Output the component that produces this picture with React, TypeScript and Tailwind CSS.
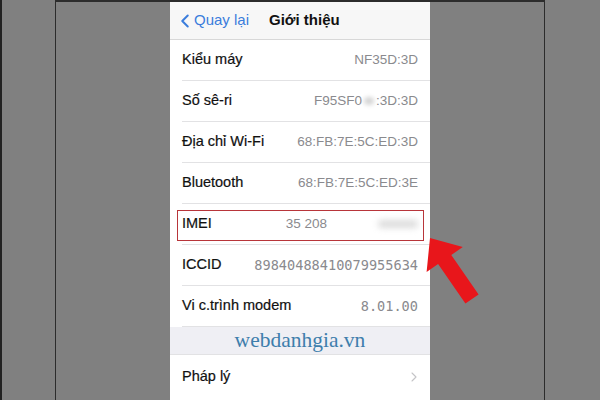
import { ChevronLeft, ChevronRight } from 'lucide-react';

type Row = {
  label: string;
  value: string;
  mono?: boolean;
  smudge?: 'mid' | 'end';
};

const rows: Row[] = [
  { label: 'Kiểu máy', value: 'NF35D:3D' },
  { label: 'Số sê-ri', value: 'F95SF0', smudge: 'mid' },
  { label: 'Địa chỉ Wi-Fi', value: '68:FB:7E:5C:ED:3D' },
  { label: 'Bluetooth', value: '68:FB:7E:5C:ED:3E' },
  { label: 'IMEI', value: '35 208', smudge: 'end' },
  { label: 'ICCID', value: '89840488410079955634', mono: true },
  { label: 'Vi c.trình modem', value: '8.01.00', mono: true },
];

function InfoRow({ row }: { row: Row }) {
  return (
    <div className="pl-3">
      <div className="h-[41px] flex items-center justify-between pr-3 border-b border-[#e2e2e4]">
        <span className="text-[14.5px] text-[#111] [-webkit-text-stroke:0.2px_#111]">{row.label}</span>
        {row.smudge === 'end' ? (
          <div className="flex items-center flex-1 pl-[74px]">
            <span className="text-[13.5px] text-[#8a8a8e]">{row.value}</span>
            <span className="ml-auto w-[40px] h-[8px] rounded-full bg-[#dcdcdc] blur-[3px]" />
          </div>
        ) : row.smudge === 'mid' ? (
          <span className="flex items-center text-[13.5px] text-[#8a8a8e]">
            {row.value}
            <span className="mx-[2px] w-[10px] h-[8px] rounded-full bg-[#d6d6d6] blur-[2px]" />
            :3D:3D
          </span>
        ) : (
          <span
            className={
              row.mono
                ? "text-[13.6px] text-[#8a8a8e] font-['DejaVu_Sans_Mono',monospace]"
                : 'text-[13.5px] text-[#8a8a8e]'
            }
          >
            {row.value}
          </span>
        )}
      </div>
    </div>
  );
}

export default function App() {
  return (
    <div className="relative w-[600px] h-[400px] bg-[#808080] border-l-2 border-[#222] font-['Liberation_Sans',Arial,sans-serif] overflow-hidden">
      <div className="ml-[53px] w-[490px] h-full border-x border-t-2 border-[#2c2c2c] flex justify-center">
        <div className="relative w-[260px] h-full bg-white">
          <div className="h-[38px] bg-[#f7f7f7] border-b border-[#d8d8d8] flex items-center relative">
            <div className="flex items-center pl-[4px] text-[#3b7ddc]">
              <ChevronLeft size={22} strokeWidth={2.2} />
              <span className="text-[15px] -ml-[2px]">Quay lại</span>
            </div>
            <span className="absolute left-[99px] text-[15px] font-semibold text-[#111]">Giới thiệu</span>
          </div>

          {rows.map((r) => (
            <InfoRow key={r.label} row={r} />
          ))}

          <div className="h-[28px] bg-[#efeff4] border-b border-[#e2e2e4] flex items-center justify-center">
            <span className="text-[21.5px] text-[#3e7eac] font-['Liberation_Serif',serif]">webdanhgia.vn</span>
          </div>

          <div className="pl-3">
            <div className="h-[44px] flex items-center justify-between pr-2">
              <span className="text-[14.5px] text-[#111] [-webkit-text-stroke:0.2px_#111]">Pháp lý</span>
              <ChevronRight size={16} strokeWidth={1.6} className="text-[#c4c4c7]" />
            </div>
          </div>

          <div className="absolute left-[7px] top-[208px] w-[247px] h-[31px] border-[1.5px] border-[#b8353a]" />
        </div>
      </div>

      <svg className="absolute left-0 top-0 pointer-events-none" width="600" height="400">
        <polygon
          points="428,238 460.8,246.9 449.3,254.9 476.6,294.5 463.4,303.5 436.1,263.9 424.6,271.9"
          fill="#e8161b"
        />
      </svg>
    </div>
  );
}
